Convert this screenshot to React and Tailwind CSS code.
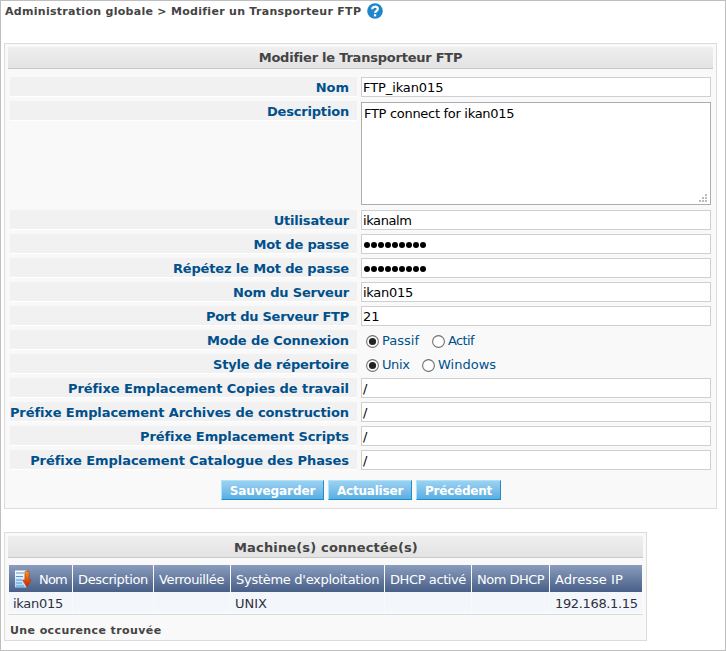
import React from "react";

const inputClass =
  "h-5 w-[350px] border border-[#cfcfcf] bg-white pl-[1px] text-[13px] leading-[19px] text-black outline-none";

function Row({ label, labelClass = "", tall = false, children }) {
  return (
    <div className={tall ? "flex h-[109px] items-start" : "flex h-6 items-start"}>
      <div className="flex h-5 w-[347px] shrink-0 justify-end border-b border-white bg-[#f1f1f1] pr-2 text-[13px] leading-[21px] font-bold whitespace-nowrap text-[#00508c]">
        <span className={labelClass}>{label}</span>
      </div>
      <div className="ml-1">{children}</div>
    </div>
  );
}

function Field({ value, className = "" }) {
  return (
    <div className={inputClass}>
      <span className={className}>{value}</span>
    </div>
  );
}

function Password() {
  return (
    <div className="flex h-5 w-[350px] items-center border border-[#cfcfcf] bg-white pt-px pl-[1.6px]">
      {Array.from({ length: 9 }, (_, i) => (
        <span key={i} className="mr-px size-1.5 rounded-full bg-black" />
      ))}
    </div>
  );
}

function Radio({ checked, label, className = "" }) {
  return (
    <div className="flex items-center">
      <svg width="13" height="13" viewBox="0 0 13 13" className="mt-[2px]">
        <circle cx="6.5" cy="6.5" r="5.9" fill="#fff" stroke="#707070" strokeWidth="1.1" />
        {checked && <circle cx="6.5" cy="6.5" r="3.6" fill="#222" />}
      </svg>
      <span className={"ml-[3px] text-[13px] leading-[21px] text-[#00508c] " + className}>{label}</span>
    </div>
  );
}

function Title({ children, className = "" }) {
  return (
    <div className="flex h-[22px] justify-center border-b border-[#c8c8c8] bg-linear-to-b from-[#efefef] to-[#e3e3e3] text-[13px] font-bold whitespace-nowrap text-[#444]">
      <span className={className}>{children}</span>
    </div>
  );
}

function Button({ children, width, className = "" }) {
  return (
    <button
      className={
        "flex h-5 justify-center border border-t-[#a6e6fb] border-r-[#1e8bcb] border-b-[#1e8bcb] border-l-[#a6e6fb] bg-linear-to-b from-[#9dd1f1] to-[#58aee2] text-[12px] leading-5 font-bold whitespace-nowrap text-white " +
        width
      }
    >
      <span className={className}>{children}</span>
    </button>
  );
}

function SortIcon() {
  return (
    <svg width="17" height="18" viewBox="0 0 17 18" className="shrink-0">
      <defs>
        <linearGradient id="sheet" x1="0" y1="0" x2="0" y2="1">
          <stop offset="0" stopColor="#fff" />
          <stop offset="1" stopColor="#a5d5fa" />
        </linearGradient>
        <linearGradient id="arrow" x1="0" y1="0" x2="0" y2="1">
          <stop offset="0" stopColor="#f59a22" />
          <stop offset="0.55" stopColor="#e45209" />
          <stop offset="1" stopColor="#c91a00" />
        </linearGradient>
      </defs>
      <rect x="0" y="0.5" width="11.5" height="17" fill="url(#sheet)" />
      <path d="M1 3h8M1 6.5h7M1 10h6M1 13h6M1 16h8" stroke="#5b95cf" strokeWidth="1" />
      <path d="M9.9 1.8c1-.8 3.2-.8 4.2 0V10h2L11.9 17 7.6 10h2.3Z" fill="url(#arrow)" stroke="#bd3d0a" strokeWidth=".6" />
    </svg>
  );
}

const columns = [
  { name: "Nom", width: "w-[63px]", value: "ikan015", text: "tracking-[-0.8px]", cell: "tracking-[-0.28px]" },
  { name: "Description", width: "w-[80px]", text: "tracking-[-0.38px]" },
  { name: "Verrouillée", width: "w-[76px]", text: "tracking-[-0.36px]" },
  { name: "Système d'exploitation", width: "w-[153px]", value: "UNIX", text: "tracking-[-0.28px]", cell: "" },
  { name: "DHCP activé", width: "w-[86px]", text: "tracking-[-0.4px]" },
  { name: "Nom DHCP", width: "w-[77px]", text: "tracking-[-0.5px]" },
  { name: "Adresse IP", width: "w-[92px]", value: "192.168.1.15", text: "tracking-[0.05px]", cell: "ml-px tracking-[-0.35px]" },
];

export default function App() {
  return (
    <div className="h-[651px] w-[726px] overflow-hidden border border-[#bfbfbf] bg-white pl-[3px] font-['Verdana','DejaVu_Sans',sans-serif]">
      <div className="flex h-[42px] items-start pl-px">
        <span className="mt-1 text-[11px] leading-[14px] font-bold tracking-[0.29px] whitespace-nowrap text-[#444]">
          Administration globale &gt; Modifier un Transporteur FTP
        </span>
        <svg width="16" height="16" viewBox="0 0 16 16" className="mt-[2px] ml-[6px]">
          <circle cx="8" cy="8" r="7.8" fill="#1f86c9" />
          <path d="M5.2 6.2C5.3 2.9 10.8 3 10.8 5.9c0 1.9-2.7 2-2.7 4.1" fill="none" stroke="#fff" strokeWidth="2.2" />
          <rect x="6.9" y="11.2" width="2.3" height="2.2" fill="#fff" />
        </svg>
      </div>

      <div className="h-[466px] w-[713px] border border-[#dcdcdc] bg-[#f9f9f9] p-[3px]">
        <Title className="leading-[22px] tracking-[-0.23px]">Modifier le Transporteur FTP</Title>
        <div className="mt-2 ml-[2px]">
          <Row label="Nom"><Field value="FTP_ikan015" className="tracking-[-0.1px]" /></Row>
          <Row label="Description" labelClass="tracking-[-0.18px]" tall>
            <div className="mt-px flex h-[103px] w-[350px] items-end justify-between border border-[#abadb3] bg-white pr-[3px] pb-[2px] pl-[2px]">
              <span className="self-start pt-[1px] text-[13px] leading-5 tracking-[-0.3px] text-black">FTP connect for ikan015</span>
              <svg width="8" height="8" viewBox="0 0 8 8">
                <path d="M6 0h2v2H6zM3 3h2v2H3zM6 3h2v2H6zM0 6h2v2H0zM3 6h2v2H3zM6 6h2v2H6z" fill="#bcbcbc" />
              </svg>
            </div>
          </Row>
          <Row label="Utilisateur" labelClass="tracking-[-0.18px]"><Field value="ikanalm" className="tracking-[-0.4px]" /></Row>
          <Row label="Mot de passe" labelClass="tracking-[-0.17px]"><Password /></Row>
          <Row label="Répétez le Mot de passe" labelClass="tracking-[-0.15px]"><Password /></Row>
          <Row label="Nom du Serveur" labelClass="tracking-[-0.18px]"><Field value="ikan015" className="tracking-[-0.28px]" /></Row>
          <Row label="Port du Serveur FTP" labelClass="tracking-[-0.26px]"><Field value="21" /></Row>
          <Row label="Mode de Connexion" labelClass="tracking-[-0.12px]">
            <div className="flex pl-[5px]">
              <div className="w-[66px]"><Radio checked label="Passif" /></div>
              <Radio label="Actif" className="tracking-[-0.6px]" />
            </div>
          </Row>
          <Row label="Style de répertoire" labelClass="tracking-[-0.16px]">
            <div className="flex pl-[5px]">
              <div className="w-[56px]"><Radio checked label="Unix" className="tracking-[-0.4px]" /></div>
              <Radio label="Windows" />
            </div>
          </Row>
          <Row label="Préfixe Emplacement Copies de travail" labelClass="tracking-[-0.08px]"><Field value="/" /></Row>
          <Row label="Préfixe Emplacement Archives de construction" labelClass="tracking-[-0.08px]"><Field value="/" /></Row>
          <Row label="Préfixe Emplacement Scripts" labelClass="tracking-[-0.1px]"><Field value="/" /></Row>
          <Row label="Préfixe Emplacement Catalogue des Phases" labelClass="tracking-[-0.06px]"><Field value="/" /></Row>
        </div>
        <div className="mt-[6px] ml-[213px] flex gap-1">
          <Button width="w-[103px]" className="tracking-[-0.07px]">Sauvegarder</Button>
          <Button width="w-[84px]" className="tracking-[-0.2px]">Actualiser</Button>
          <Button width="w-[85px]" className="tracking-[-0.25px]">Précédent</Button>
        </div>
      </div>

      <div className="mt-[23px] h-[109px] w-[643px] border border-[#dcdcdc] bg-[#f9f9f9] p-[3px]">
        <Title className="pl-px leading-6 tracking-[0.15px]">Machine(s) connectée(s)</Title>
        <div className="mt-[7px] border-b border-[#dcdcdc] px-px pb-[2px]">
          <div className="flex gap-px">
            {columns.map((c, i) => (
              <div
                key={c.name}
                className={
                  "flex h-[27px] items-center bg-linear-to-b from-[#8b9dbd] to-[#485f87] pl-[5px] text-[13px] whitespace-nowrap text-white " +
                  c.width
                }
              >
                {i === 0 && <span className="mr-[7px] ml-px"><SortIcon /></span>}
                <span className={"pt-[2px] " + c.text}>{c.name}</span>
              </div>
            ))}
          </div>
          <div className="flex gap-px">
            {columns.map((c) => (
              <div key={c.name} className={"h-5 bg-[#f3f7fc] pl-1 text-[13px] leading-[23px] whitespace-nowrap text-[#303040] " + c.width}>
                <span className={c.cell}>{c.value}</span>
              </div>
            ))}
          </div>
        </div>
        <div className="pt-2 pl-[2px] text-[11px] leading-4 font-bold text-[#444]"><span className="tracking-[0.4px]">Une occurence trouvée</span></div>
      </div>
    </div>
  );
}
